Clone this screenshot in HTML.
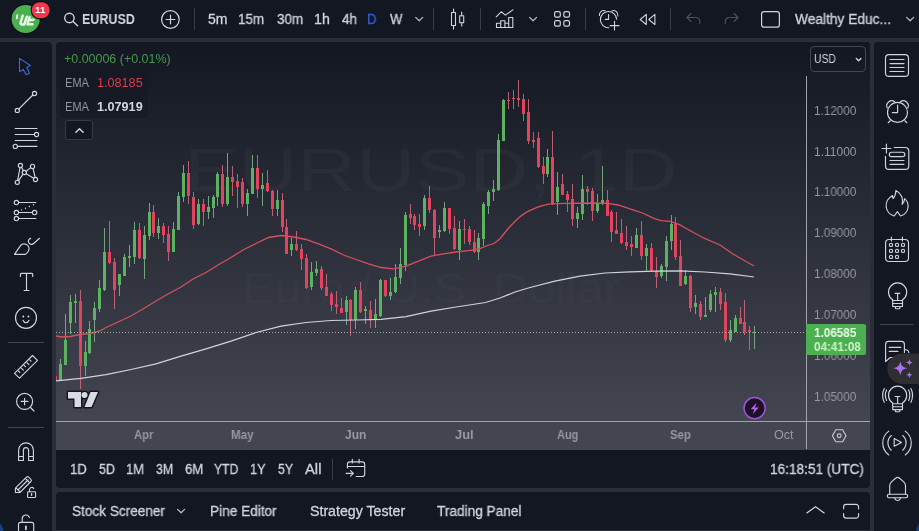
<!DOCTYPE html>
<html><head><meta charset="utf-8"><title>EURUSD chart</title>
<style>
*{box-sizing:border-box;margin:0;padding:0}
html,body{width:919px;height:531px;overflow:hidden;background:#2a2e39}
body{font-family:"Liberation Sans",sans-serif;color:#d1d4dc;font-size:14px;position:relative}
.p{position:absolute;background:#131722}
.t{position:absolute;white-space:nowrap;line-height:1;transform-origin:0 0;will-change:transform;-webkit-text-stroke:0.3px currentColor}
.b{font-weight:bold}
svg{position:absolute;overflow:visible}
.i{fill:none;stroke:#d1d4dc;stroke-width:1;stroke-linecap:round;stroke-linejoin:round}
.vs{position:absolute;width:1px;background:#3a3e4a}
.hs{position:absolute;height:1px;background:#363a45}
</style></head><body>
<!-- panels -->
<div class="p" id="top" style="left:0;top:0;width:919px;height:38px"></div>
<div class="p" id="left" style="left:0;top:42px;width:52px;height:489px;border-radius:0 4px 0 0"></div>
<div class="p" id="chart" style="left:56px;top:42px;width:814px;height:446px;border-radius:4px;overflow:hidden">
  <div style="position:absolute;left:0;top:0;width:814px;height:380px;background:linear-gradient(#131722,#434651)"></div>
  <div style="position:absolute;left:0;top:379px;width:814px;height:29px;background:#434651"></div>
</div>
<div class="p" id="bottom" style="left:56px;top:492px;width:814px;height:38px;border-radius:4px 4px 0 0"></div>
<div class="p" id="right" style="left:874px;top:42px;width:45px;height:489px;border-radius:4px 0 0 0"></div>

<!-- chart svg -->
<svg id="cs" width="919" height="531" viewBox="0 0 919 531" style="left:0;top:0" shape-rendering="crispEdges">
  <defs><clipPath id="cp"><rect x="56" y="42" width="750" height="379"/></clipPath></defs>
  <g font-family="Liberation Sans, sans-serif" fill="#b0b4c4" fill-opacity="0.045" text-anchor="middle" shape-rendering="auto">
    <text x="431" y="190.500" font-size="61" textLength="494" lengthAdjust="spacingAndGlyphs">EURUSD, 1D</text>
    <text x="431" y="303" font-size="43" textLength="378" lengthAdjust="spacingAndGlyphs">Euro / U.S. Dollar</text>
  </g>
  <g clip-path="url(#cp)">
<rect x="55" y="376" width="1" height="5" fill="#d56a7c" fill-opacity=".85"/><rect x="54" y="376" width="3" height="5" fill="#e3435c"/>
<rect x="60" y="359" width="1" height="21" fill="#7fb888" fill-opacity=".85"/><rect x="59" y="364" width="3" height="16" fill="#5cb260"/>
<rect x="65" y="314" width="1" height="51" fill="#7fb888" fill-opacity=".85"/><rect x="64" y="340" width="3" height="25" fill="#5cb260"/>
<rect x="70" y="295" width="1" height="39" fill="#7fb888" fill-opacity=".85"/><rect x="69" y="302" width="3" height="21" fill="#5cb260"/>
<rect x="75" y="294" width="1" height="29" fill="#7fb888" fill-opacity=".85"/><rect x="74" y="301" width="3" height="2" fill="#5cb260"/>
<rect x="80" y="290" width="1" height="99" fill="#d56a7c" fill-opacity=".85"/><rect x="79" y="301" width="3" height="65" fill="#e3435c"/>
<rect x="85" y="341" width="1" height="35" fill="#7fb888" fill-opacity=".85"/><rect x="84" y="352" width="3" height="14" fill="#5cb260"/>
<rect x="89" y="321" width="1" height="33" fill="#7fb888" fill-opacity=".85"/><rect x="88" y="329" width="3" height="24" fill="#5cb260"/>
<rect x="94" y="302" width="1" height="40" fill="#7fb888" fill-opacity=".85"/><rect x="93" y="308" width="3" height="12" fill="#5cb260"/>
<rect x="99" y="280" width="1" height="32" fill="#7fb888" fill-opacity=".85"/><rect x="98" y="288" width="3" height="21" fill="#5cb260"/>
<rect x="104" y="228" width="1" height="63" fill="#7fb888" fill-opacity=".85"/><rect x="103" y="252" width="3" height="38" fill="#5cb260"/>
<rect x="109" y="221" width="1" height="43" fill="#d56a7c" fill-opacity=".85"/><rect x="108" y="252" width="3" height="11" fill="#e3435c"/>
<rect x="114" y="258" width="1" height="51" fill="#d56a7c" fill-opacity=".85"/><rect x="113" y="262" width="3" height="28" fill="#e3435c"/>
<rect x="119" y="274" width="1" height="22" fill="#7fb888" fill-opacity=".85"/><rect x="118" y="274" width="3" height="11" fill="#5cb260"/>
<rect x="124" y="254" width="1" height="22" fill="#7fb888" fill-opacity=".85"/><rect x="123" y="257" width="3" height="19" fill="#5cb260"/>
<rect x="129" y="245" width="1" height="22" fill="#7fb888" fill-opacity=".85"/><rect x="128" y="256" width="3" height="2" fill="#5cb260"/>
<rect x="134" y="222" width="1" height="42" fill="#7fb888" fill-opacity=".85"/><rect x="133" y="230" width="3" height="27" fill="#5cb260"/>
<rect x="139" y="223" width="1" height="36" fill="#d56a7c" fill-opacity=".85"/><rect x="138" y="230" width="3" height="28" fill="#e3435c"/>
<rect x="144" y="226" width="1" height="53" fill="#7fb888" fill-opacity=".85"/><rect x="143" y="235" width="3" height="24" fill="#5cb260"/>
<rect x="149" y="203" width="1" height="37" fill="#7fb888" fill-opacity=".85"/><rect x="148" y="212" width="3" height="24" fill="#5cb260"/>
<rect x="153" y="205" width="1" height="32" fill="#d56a7c" fill-opacity=".85"/><rect x="152" y="212" width="3" height="21" fill="#e3435c"/>
<rect x="158" y="218" width="1" height="21" fill="#7fb888" fill-opacity=".85"/><rect x="157" y="226" width="3" height="7" fill="#5cb260"/>
<rect x="163" y="223" width="1" height="20" fill="#d56a7c" fill-opacity=".85"/><rect x="162" y="226" width="3" height="9" fill="#e3435c"/>
<rect x="168" y="226" width="1" height="35" fill="#d56a7c" fill-opacity=".85"/><rect x="167" y="234" width="3" height="18" fill="#e3435c"/>
<rect x="173" y="222" width="1" height="30" fill="#7fb888" fill-opacity=".85"/><rect x="172" y="229" width="3" height="23" fill="#5cb260"/>
<rect x="178" y="192" width="1" height="38" fill="#7fb888" fill-opacity=".85"/><rect x="177" y="196" width="3" height="34" fill="#5cb260"/>
<rect x="183" y="165" width="1" height="37" fill="#7fb888" fill-opacity=".85"/><rect x="182" y="173" width="3" height="24" fill="#5cb260"/>
<rect x="188" y="161" width="1" height="43" fill="#d56a7c" fill-opacity=".85"/><rect x="187" y="173" width="3" height="23" fill="#e3435c"/>
<rect x="193" y="192" width="1" height="37" fill="#d56a7c" fill-opacity=".85"/><rect x="192" y="197" width="3" height="28" fill="#e3435c"/>
<rect x="198" y="199" width="1" height="26" fill="#7fb888" fill-opacity=".85"/><rect x="197" y="204" width="3" height="20" fill="#5cb260"/>
<rect x="203" y="199" width="1" height="27" fill="#d56a7c" fill-opacity=".85"/><rect x="202" y="204" width="3" height="8" fill="#e3435c"/>
<rect x="208" y="196" width="1" height="23" fill="#7fb888" fill-opacity=".85"/><rect x="207" y="207" width="3" height="5" fill="#5cb260"/>
<rect x="213" y="195" width="1" height="23" fill="#7fb888" fill-opacity=".85"/><rect x="212" y="197" width="3" height="11" fill="#5cb260"/>
<rect x="217" y="172" width="1" height="34" fill="#7fb888" fill-opacity=".85"/><rect x="216" y="174" width="3" height="23" fill="#5cb260"/>
<rect x="222" y="165" width="1" height="42" fill="#d56a7c" fill-opacity=".85"/><rect x="221" y="174" width="3" height="30" fill="#e3435c"/>
<rect x="227" y="153" width="1" height="53" fill="#7fb888" fill-opacity=".85"/><rect x="226" y="177" width="3" height="27" fill="#5cb260"/>
<rect x="232" y="166" width="1" height="30" fill="#d56a7c" fill-opacity=".85"/><rect x="231" y="177" width="3" height="5" fill="#e3435c"/>
<rect x="237" y="174" width="1" height="34" fill="#d56a7c" fill-opacity=".85"/><rect x="236" y="181" width="3" height="6" fill="#e3435c"/>
<rect x="242" y="178" width="1" height="29" fill="#d56a7c" fill-opacity=".85"/><rect x="241" y="182" width="3" height="22" fill="#e3435c"/>
<rect x="247" y="189" width="1" height="27" fill="#7fb888" fill-opacity=".85"/><rect x="246" y="193" width="3" height="11" fill="#5cb260"/>
<rect x="252" y="155" width="1" height="39" fill="#7fb888" fill-opacity=".85"/><rect x="251" y="168" width="3" height="26" fill="#5cb260"/>
<rect x="257" y="155" width="1" height="43" fill="#d56a7c" fill-opacity=".85"/><rect x="256" y="168" width="3" height="21" fill="#e3435c"/>
<rect x="262" y="173" width="1" height="33" fill="#7fb888" fill-opacity=".85"/><rect x="261" y="185" width="3" height="4" fill="#5cb260"/>
<rect x="267" y="170" width="1" height="22" fill="#d56a7c" fill-opacity=".85"/><rect x="266" y="183" width="3" height="8" fill="#e3435c"/>
<rect x="272" y="190" width="1" height="26" fill="#d56a7c" fill-opacity=".85"/><rect x="271" y="191" width="3" height="18" fill="#e3435c"/>
<rect x="277" y="190" width="1" height="26" fill="#7fb888" fill-opacity=".85"/><rect x="276" y="200" width="3" height="9" fill="#5cb260"/>
<rect x="282" y="193" width="1" height="39" fill="#d56a7c" fill-opacity=".85"/><rect x="281" y="200" width="3" height="27" fill="#e3435c"/>
<rect x="286" y="219" width="1" height="35" fill="#d56a7c" fill-opacity=".85"/><rect x="285" y="227" width="3" height="27" fill="#e3435c"/>
<rect x="291" y="238" width="1" height="18" fill="#7fb888" fill-opacity=".85"/><rect x="290" y="244" width="3" height="6" fill="#5cb260"/>
<rect x="296" y="231" width="1" height="20" fill="#d56a7c" fill-opacity=".85"/><rect x="295" y="244" width="3" height="6" fill="#e3435c"/>
<rect x="301" y="244" width="1" height="26" fill="#d56a7c" fill-opacity=".85"/><rect x="300" y="249" width="3" height="10" fill="#e3435c"/>
<rect x="306" y="254" width="1" height="35" fill="#d56a7c" fill-opacity=".85"/><rect x="305" y="258" width="3" height="30" fill="#e3435c"/>
<rect x="311" y="262" width="1" height="28" fill="#7fb888" fill-opacity=".85"/><rect x="310" y="272" width="3" height="15" fill="#5cb260"/>
<rect x="316" y="261" width="1" height="15" fill="#7fb888" fill-opacity=".85"/><rect x="315" y="269" width="3" height="4" fill="#5cb260"/>
<rect x="321" y="266" width="1" height="24" fill="#d56a7c" fill-opacity=".85"/><rect x="320" y="269" width="3" height="19" fill="#e3435c"/>
<rect x="326" y="274" width="1" height="22" fill="#d56a7c" fill-opacity=".85"/><rect x="325" y="287" width="3" height="9" fill="#e3435c"/>
<rect x="331" y="292" width="1" height="19" fill="#d56a7c" fill-opacity=".85"/><rect x="330" y="294" width="3" height="11" fill="#e3435c"/>
<rect x="336" y="291" width="1" height="23" fill="#d56a7c" fill-opacity=".85"/><rect x="335" y="304" width="3" height="3" fill="#e3435c"/>
<rect x="341" y="298" width="1" height="15" fill="#d56a7c" fill-opacity=".85"/><rect x="340" y="308" width="3" height="5" fill="#e3435c"/>
<rect x="346" y="296" width="1" height="29" fill="#7fb888" fill-opacity=".85"/><rect x="345" y="300" width="3" height="12" fill="#5cb260"/>
<rect x="350" y="299" width="1" height="37" fill="#d56a7c" fill-opacity=".85"/><rect x="349" y="300" width="3" height="20" fill="#e3435c"/>
<rect x="355" y="287" width="1" height="42" fill="#7fb888" fill-opacity=".85"/><rect x="354" y="290" width="3" height="30" fill="#5cb260"/>
<rect x="360" y="282" width="1" height="31" fill="#d56a7c" fill-opacity=".85"/><rect x="359" y="290" width="3" height="22" fill="#e3435c"/>
<rect x="365" y="306" width="1" height="18" fill="#7fb888" fill-opacity=".85"/><rect x="364" y="309" width="3" height="2" fill="#5cb260"/>
<rect x="370" y="301" width="1" height="27" fill="#d56a7c" fill-opacity=".85"/><rect x="369" y="310" width="3" height="10" fill="#e3435c"/>
<rect x="375" y="299" width="1" height="29" fill="#7fb888" fill-opacity=".85"/><rect x="374" y="314" width="3" height="6" fill="#5cb260"/>
<rect x="380" y="279" width="1" height="38" fill="#7fb888" fill-opacity=".85"/><rect x="379" y="280" width="3" height="36" fill="#5cb260"/>
<rect x="385" y="280" width="1" height="17" fill="#d56a7c" fill-opacity=".85"/><rect x="384" y="280" width="3" height="16" fill="#e3435c"/>
<rect x="390" y="278" width="1" height="22" fill="#7fb888" fill-opacity=".85"/><rect x="389" y="292" width="3" height="4" fill="#5cb260"/>
<rect x="395" y="264" width="1" height="29" fill="#7fb888" fill-opacity=".85"/><rect x="394" y="277" width="3" height="15" fill="#5cb260"/>
<rect x="400" y="248" width="1" height="36" fill="#7fb888" fill-opacity=".85"/><rect x="399" y="264" width="3" height="14" fill="#5cb260"/>
<rect x="405" y="212" width="1" height="59" fill="#7fb888" fill-opacity=".85"/><rect x="404" y="215" width="3" height="50" fill="#5cb260"/>
<rect x="410" y="204" width="1" height="20" fill="#d56a7c" fill-opacity=".85"/><rect x="409" y="214" width="3" height="4" fill="#e3435c"/>
<rect x="414" y="214" width="1" height="16" fill="#d56a7c" fill-opacity=".85"/><rect x="413" y="216" width="3" height="9" fill="#e3435c"/>
<rect x="419" y="214" width="1" height="22" fill="#d56a7c" fill-opacity=".85"/><rect x="418" y="224" width="3" height="3" fill="#e3435c"/>
<rect x="424" y="195" width="1" height="35" fill="#7fb888" fill-opacity=".85"/><rect x="423" y="198" width="3" height="28" fill="#5cb260"/>
<rect x="429" y="186" width="1" height="27" fill="#d56a7c" fill-opacity=".85"/><rect x="428" y="198" width="3" height="12" fill="#e3435c"/>
<rect x="434" y="209" width="1" height="47" fill="#d56a7c" fill-opacity=".85"/><rect x="433" y="210" width="3" height="28" fill="#e3435c"/>
<rect x="439" y="225" width="1" height="13" fill="#7fb888" fill-opacity=".85"/><rect x="438" y="230" width="3" height="2" fill="#5cb260"/>
<rect x="444" y="202" width="1" height="30" fill="#7fb888" fill-opacity=".85"/><rect x="443" y="208" width="3" height="23" fill="#5cb260"/>
<rect x="449" y="208" width="1" height="26" fill="#d56a7c" fill-opacity=".85"/><rect x="448" y="208" width="3" height="21" fill="#e3435c"/>
<rect x="454" y="216" width="1" height="34" fill="#d56a7c" fill-opacity=".85"/><rect x="453" y="228" width="3" height="21" fill="#e3435c"/>
<rect x="459" y="221" width="1" height="39" fill="#7fb888" fill-opacity=".85"/><rect x="458" y="229" width="3" height="21" fill="#5cb260"/>
<rect x="464" y="219" width="1" height="25" fill="#d56a7c" fill-opacity=".85"/><rect x="463" y="229" width="3" height="1" fill="#e3435c"/>
<rect x="469" y="226" width="1" height="19" fill="#d56a7c" fill-opacity=".85"/><rect x="468" y="229" width="3" height="13" fill="#e3435c"/>
<rect x="474" y="230" width="1" height="23" fill="#d56a7c" fill-opacity=".85"/><rect x="473" y="242" width="3" height="10" fill="#e3435c"/>
<rect x="478" y="233" width="1" height="27" fill="#7fb888" fill-opacity=".85"/><rect x="477" y="238" width="3" height="14" fill="#5cb260"/>
<rect x="483" y="202" width="1" height="44" fill="#7fb888" fill-opacity=".85"/><rect x="482" y="204" width="3" height="35" fill="#5cb260"/>
<rect x="488" y="190" width="1" height="24" fill="#7fb888" fill-opacity=".85"/><rect x="487" y="192" width="3" height="14" fill="#5cb260"/>
<rect x="493" y="180" width="1" height="21" fill="#7fb888" fill-opacity=".85"/><rect x="492" y="189" width="3" height="3" fill="#5cb260"/>
<rect x="498" y="134" width="1" height="57" fill="#7fb888" fill-opacity=".85"/><rect x="497" y="140" width="3" height="50" fill="#5cb260"/>
<rect x="503" y="99" width="1" height="42" fill="#7fb888" fill-opacity=".85"/><rect x="502" y="100" width="3" height="41" fill="#5cb260"/>
<rect x="508" y="92" width="1" height="17" fill="#d56a7c" fill-opacity=".85"/><rect x="507" y="100" width="3" height="1" fill="#e3435c"/>
<rect x="513" y="90" width="1" height="19" fill="#d56a7c" fill-opacity=".85"/><rect x="512" y="98" width="3" height="1" fill="#e3435c"/>
<rect x="518" y="80" width="1" height="27" fill="#d56a7c" fill-opacity=".85"/><rect x="517" y="98" width="3" height="2" fill="#e3435c"/>
<rect x="523" y="94" width="1" height="27" fill="#d56a7c" fill-opacity=".85"/><rect x="522" y="99" width="3" height="15" fill="#e3435c"/>
<rect x="528" y="99" width="1" height="45" fill="#d56a7c" fill-opacity=".85"/><rect x="527" y="112" width="3" height="29" fill="#e3435c"/>
<rect x="533" y="132" width="1" height="16" fill="#d56a7c" fill-opacity=".85"/><rect x="532" y="140" width="3" height="2" fill="#e3435c"/>
<rect x="538" y="132" width="1" height="36" fill="#d56a7c" fill-opacity=".85"/><rect x="537" y="138" width="3" height="29" fill="#e3435c"/>
<rect x="543" y="157" width="1" height="27" fill="#d56a7c" fill-opacity=".85"/><rect x="542" y="166" width="3" height="8" fill="#e3435c"/>
<rect x="547" y="149" width="1" height="28" fill="#7fb888" fill-opacity=".85"/><rect x="546" y="157" width="3" height="17" fill="#5cb260"/>
<rect x="552" y="131" width="1" height="74" fill="#d56a7c" fill-opacity=".85"/><rect x="551" y="157" width="3" height="47" fill="#e3435c"/>
<rect x="557" y="172" width="1" height="43" fill="#7fb888" fill-opacity=".85"/><rect x="556" y="187" width="3" height="15" fill="#5cb260"/>
<rect x="562" y="174" width="1" height="21" fill="#d56a7c" fill-opacity=".85"/><rect x="561" y="184" width="3" height="11" fill="#e3435c"/>
<rect x="567" y="191" width="1" height="21" fill="#d56a7c" fill-opacity=".85"/><rect x="566" y="194" width="3" height="6" fill="#e3435c"/>
<rect x="572" y="184" width="1" height="42" fill="#d56a7c" fill-opacity=".85"/><rect x="571" y="199" width="3" height="20" fill="#e3435c"/>
<rect x="577" y="207" width="1" height="21" fill="#7fb888" fill-opacity=".85"/><rect x="576" y="213" width="3" height="6" fill="#5cb260"/>
<rect x="582" y="175" width="1" height="45" fill="#7fb888" fill-opacity=".85"/><rect x="581" y="189" width="3" height="25" fill="#5cb260"/>
<rect x="587" y="186" width="1" height="19" fill="#d56a7c" fill-opacity=".85"/><rect x="586" y="189" width="3" height="3" fill="#e3435c"/>
<rect x="592" y="188" width="1" height="33" fill="#d56a7c" fill-opacity=".85"/><rect x="591" y="191" width="3" height="20" fill="#e3435c"/>
<rect x="597" y="194" width="1" height="19" fill="#7fb888" fill-opacity=".85"/><rect x="596" y="203" width="3" height="8" fill="#5cb260"/>
<rect x="602" y="166" width="1" height="39" fill="#7fb888" fill-opacity=".85"/><rect x="601" y="200" width="3" height="4" fill="#5cb260"/>
<rect x="607" y="190" width="1" height="26" fill="#d56a7c" fill-opacity=".85"/><rect x="606" y="200" width="3" height="16" fill="#e3435c"/>
<rect x="611" y="210" width="1" height="32" fill="#d56a7c" fill-opacity=".85"/><rect x="610" y="212" width="3" height="20" fill="#e3435c"/>
<rect x="616" y="212" width="1" height="22" fill="#d56a7c" fill-opacity=".85"/><rect x="615" y="230" width="3" height="4" fill="#e3435c"/>
<rect x="621" y="219" width="1" height="25" fill="#d56a7c" fill-opacity=".85"/><rect x="620" y="233" width="3" height="10" fill="#e3435c"/>
<rect x="626" y="226" width="1" height="24" fill="#d56a7c" fill-opacity=".85"/><rect x="625" y="242" width="3" height="4" fill="#e3435c"/>
<rect x="631" y="236" width="1" height="20" fill="#d56a7c" fill-opacity=".85"/><rect x="630" y="244" width="3" height="3" fill="#e3435c"/>
<rect x="636" y="228" width="1" height="20" fill="#7fb888" fill-opacity=".85"/><rect x="635" y="235" width="3" height="13" fill="#5cb260"/>
<rect x="641" y="221" width="1" height="39" fill="#d56a7c" fill-opacity=".85"/><rect x="640" y="235" width="3" height="21" fill="#e3435c"/>
<rect x="646" y="244" width="1" height="27" fill="#7fb888" fill-opacity=".85"/><rect x="645" y="248" width="3" height="8" fill="#5cb260"/>
<rect x="651" y="243" width="1" height="29" fill="#d56a7c" fill-opacity=".85"/><rect x="650" y="248" width="3" height="23" fill="#e3435c"/>
<rect x="656" y="257" width="1" height="31" fill="#d56a7c" fill-opacity=".85"/><rect x="655" y="271" width="3" height="6" fill="#e3435c"/>
<rect x="661" y="264" width="1" height="14" fill="#7fb888" fill-opacity=".85"/><rect x="660" y="266" width="3" height="10" fill="#5cb260"/>
<rect x="666" y="236" width="1" height="45" fill="#7fb888" fill-opacity=".85"/><rect x="665" y="241" width="3" height="26" fill="#5cb260"/>
<rect x="671" y="215" width="1" height="35" fill="#7fb888" fill-opacity=".85"/><rect x="670" y="224" width="3" height="17" fill="#5cb260"/>
<rect x="675" y="217" width="1" height="43" fill="#d56a7c" fill-opacity=".85"/><rect x="674" y="224" width="3" height="33" fill="#e3435c"/>
<rect x="680" y="240" width="1" height="46" fill="#d56a7c" fill-opacity=".85"/><rect x="679" y="256" width="3" height="30" fill="#e3435c"/>
<rect x="685" y="270" width="1" height="15" fill="#7fb888" fill-opacity=".85"/><rect x="684" y="276" width="3" height="8" fill="#5cb260"/>
<rect x="690" y="275" width="1" height="37" fill="#d56a7c" fill-opacity=".85"/><rect x="689" y="276" width="3" height="32" fill="#e3435c"/>
<rect x="695" y="295" width="1" height="19" fill="#7fb888" fill-opacity=".85"/><rect x="694" y="303" width="3" height="4" fill="#5cb260"/>
<rect x="700" y="301" width="1" height="19" fill="#d56a7c" fill-opacity=".85"/><rect x="699" y="304" width="3" height="13" fill="#e3435c"/>
<rect x="705" y="297" width="1" height="20" fill="#7fb888" fill-opacity=".85"/><rect x="704" y="315" width="3" height="2" fill="#5cb260"/>
<rect x="710" y="290" width="1" height="22" fill="#7fb888" fill-opacity=".85"/><rect x="709" y="294" width="3" height="16" fill="#5cb260"/>
<rect x="715" y="287" width="1" height="25" fill="#7fb888" fill-opacity=".85"/><rect x="714" y="292" width="3" height="3" fill="#5cb260"/>
<rect x="720" y="288" width="1" height="22" fill="#d56a7c" fill-opacity=".85"/><rect x="719" y="292" width="3" height="12" fill="#e3435c"/>
<rect x="725" y="293" width="1" height="49" fill="#d56a7c" fill-opacity=".85"/><rect x="724" y="302" width="3" height="38" fill="#e3435c"/>
<rect x="730" y="320" width="1" height="22" fill="#7fb888" fill-opacity=".85"/><rect x="729" y="330" width="3" height="10" fill="#5cb260"/>
<rect x="735" y="315" width="1" height="17" fill="#7fb888" fill-opacity=".85"/><rect x="734" y="318" width="3" height="14" fill="#5cb260"/>
<rect x="740" y="307" width="1" height="17" fill="#d56a7c" fill-opacity=".85"/><rect x="739" y="318" width="3" height="6" fill="#e3435c"/>
<rect x="744" y="300" width="1" height="35" fill="#d56a7c" fill-opacity=".85"/><rect x="743" y="322" width="3" height="10" fill="#e3435c"/>
<rect x="749" y="326" width="1" height="24" fill="#d56a7c" fill-opacity=".85"/><rect x="748" y="330" width="3" height="2" fill="#e3435c"/>
<rect x="754" y="326" width="1" height="23" fill="#7fb888" fill-opacity=".85"/><rect x="753" y="332" width="3" height="1" fill="#5cb260"/>
    <polyline points="56.0,381.0 81.0,378.4 106.0,374.6 131.0,369.5 156.0,363.8 181.0,356.2 206.0,348.8 231.0,341.2 256.0,332.5 281.0,326.2 306.0,322.5 331.0,320.5 356.0,320.0 381.0,319.4 406.0,316.6 431.0,311.2 456.0,307.0 485.5,302.5 500.0,298.0 515.0,292.0 530.0,287.5 555.0,281.2 580.0,276.2 605.0,273.0 630.0,271.8 655.0,271.2 680.0,270.8 705.0,272.0 730.0,273.8 754.0,277.0" fill="none" stroke="#cfd2da" stroke-width="1.25" shape-rendering="auto"/>
    <polyline points="56.0,336.0 62.0,337.0 70.0,336.5 80.0,334.5 90.0,333.5 100.0,331.0 106.0,327.5 118.0,322.0 131.0,316.0 143.0,309.0 156.0,301.0 168.0,294.0 181.0,287.0 193.0,279.0 206.0,272.5 218.0,265.0 231.0,257.5 243.0,250.0 256.0,243.5 268.5,237.5 281.0,235.5 293.5,237.0 306.0,239.5 318.5,243.8 331.0,248.8 343.5,255.0 356.0,259.5 368.5,263.8 381.0,267.5 393.5,268.8 406.0,266.2 418.5,261.2 431.0,256.2 443.5,253.8 456.0,252.0 468.5,250.6 474.0,250.0 480.0,248.7 487.5,245.5 494.0,243.5 500.0,238.7 505.0,232.5 510.0,226.5 515.0,221.5 519.0,217.5 523.8,213.9 528.0,211.3 532.5,209.4 537.0,207.4 542.5,205.6 548.8,204.2 557.5,203.6 567.5,203.3 592.5,203.0 607.5,203.3 618.0,205.0 630.0,208.8 642.5,213.0 655.0,218.8 661.0,220.6 670.0,221.3 679.0,224.4 689.0,230.0 704.0,238.2 720.0,245.0 732.5,253.8 743.0,259.8 754.0,266.0" fill="none" stroke="#d4505c" stroke-width="1.3" shape-rendering="auto"/>
    <line x1="56" y1="332.5" x2="806" y2="332.5" stroke="#c3cdc4" stroke-opacity="0.75" stroke-width="1" stroke-dasharray="1 2"/>
  </g>
  <rect x="806" y="76" width="1" height="373" fill="#a0a3ad"/>
  <rect x="56" y="421" width="814" height="1" fill="#a0a3ad"/>
</svg>

<div class="t" style="left:814.02px;top:105.00px;font-size:12px;-webkit-text-stroke:0;color:#9598a1;transform:scaleX(0.9762)">1.12000</div>
<div class="t" style="left:814.00px;top:146.00px;font-size:12px;-webkit-text-stroke:0;color:#9598a1;transform:scaleX(1.0000)">1.11000</div>
<div class="t" style="left:814.02px;top:186.00px;font-size:12px;-webkit-text-stroke:0;color:#9598a1;transform:scaleX(0.9762)">1.10000</div>
<div class="t" style="left:814.02px;top:227.00px;font-size:12px;-webkit-text-stroke:0;color:#9598a1;transform:scaleX(0.9762)">1.09000</div>
<div class="t" style="left:814.02px;top:268.00px;font-size:12px;-webkit-text-stroke:0;color:#9598a1;transform:scaleX(0.9762)">1.08000</div>
<div class="t" style="left:814.02px;top:309.00px;font-size:12px;-webkit-text-stroke:0;color:#9598a1;transform:scaleX(0.9762)">1.07000</div>
<div class="t" style="left:814.02px;top:350.00px;font-size:12px;-webkit-text-stroke:0;color:#9598a1;transform:scaleX(0.9762)">1.06000</div>
<div class="t" style="left:814.02px;top:391.00px;font-size:12px;-webkit-text-stroke:0;color:#9598a1;transform:scaleX(0.9762)">1.05000</div>
<!-- price axis -->
<div style="position:absolute;left:806px;top:324px;width:60px;height:31px;background:#4caf50;border-radius:2px"></div>
<div style="position:absolute;left:810px;top:46px;width:56px;height:26px;border:1px solid #434651;border-radius:4px"></div>
<svg width="919" height="80" style="left:0;top:0" viewBox="0 0 919 80" shape-rendering="auto"><path class="i" style="stroke-width:1.400" d="M856.300 58.500l2.300 2.300l2.300-2.300"/></svg>

<!-- time axis -->
<svg width="919" height="30" style="left:0;top:420px" viewBox="0 420 919 30" shape-rendering="auto"><g class="i" style="stroke:#c5c8d0;stroke-width:1.150"><path d="M832.400 435.700L835.800 429.700H842.600L846 435.700L842.600 441.700H835.800Z"/><circle cx="839.200" cy="435.700" r="1.900"/></g></svg>

<!-- legend -->
<div style="position:absolute;left:60px;top:72px;width:88px;height:46px;background:rgba(19,23,34,0.55);border-radius:3px"></div>
<div style="position:absolute;left:65px;top:120px;width:28px;height:20px;border:1px solid #363a45;border-radius:3px;background:#131722"></div>
<svg width="919" height="150" style="left:0;top:0" viewBox="0 0 919 150" shape-rendering="auto"><path class="i" style="stroke-width:1.500" d="M75.900 132.200l3.600-3.500l3.600 3.500"/></svg>

<!-- TV logo -->
<svg width="34" height="20" style="left:65px;top:389px" viewBox="0 0 34 20" shape-rendering="auto">
 <g stroke="#131722" stroke-width="3" stroke-linejoin="round" fill="#131722"><path d="M3 3h13v15h-6.500v-8.500h-6.500z"/><circle cx="19.500" cy="6" r="3"/><path d="M25.500 3h7.500l-6.500 15h-7z"/></g>
 <g fill="#d9dbe3"><path d="M3 3h13v15h-6.500v-8.500h-6.500z"/><circle cx="19.500" cy="6" r="3"/><path d="M25.500 3h7.500l-6.500 15h-7z"/></g>
</svg>
<!-- lightning -->
<svg width="919" height="40" style="left:0;top:390px" viewBox="0 390 919 40" shape-rendering="auto"><circle cx="754.600" cy="408.100" r="10.600" fill="#1c1128" stroke="#a052d0" stroke-width="1.500"/><path d="M756.600 402.800L750.600 409.200H754.400L752.700 414.300L758.700 407.600H754.900Z" fill="#c05ee6"/></svg>

<!-- top bar -->
<svg width="44" height="38" style="left:8px;top:0" viewBox="8 0 44 38" shape-rendering="auto">
 <circle cx="25.700" cy="19" r="15.200" fill="#0b0e16"/>
 <circle cx="25.700" cy="19" r="14.100" fill="#4caf50"/>
 <g fill="none" stroke="#ecfbea" stroke-linecap="round" stroke-linejoin="round">
  <path d="M17.300 15.200L16.800 18.400" stroke-width="1.900"/>
  <path d="M22.700 15.600L20.700 22.200C20.200 23.900 21 24.400 22.300 24.400H24.300L26.800 16.800" stroke-width="2.500"/>
  <path d="M29.600 17L27.400 24.300H32.600M28.700 20.200L33.600 19.700" stroke-width="2.400"/>
 </g>
 <rect x="30.600" y="0.700" width="20.200" height="18.800" rx="9.400" fill="#0b0e16"/>
 <rect x="31.700" y="2.200" width="18" height="16.100" rx="8" fill="#f0384a"/>
</svg>
<svg id="tb" width="919" height="38" style="left:0;top:0" viewBox="0 0 919 38" shape-rendering="auto">
 <g class="i" style="stroke-width:1.4"><circle cx="69.400" cy="18" r="4.700"/><path d="M73 21.600l4.600 4.200"/></g>
 <g class="i" style="stroke-width:1.200"><circle cx="170.400" cy="19.500" r="8.800"/><path d="M166.200 19.500h8.600M170.500 15.200v8.600"/></g>
 <g class="i" style="stroke:#b8bbc4;stroke-width:1.300"><path d="M415.700 17.400l3.500 3.300l3.500-3.300"/><path d="M529.600 17.400l3.500 3.300l3.500-3.300"/><path d="M906.600 17.400l3.500 3.300l3.500-3.300"/></g>
 <g class="i" style="stroke-width:1.100"><path d="M453.500 9v3.500M453.500 25.500v3.400M461.700 12v3.800M461.700 22.700v3.300"/><rect x="451.500" y="12.500" width="4" height="13"/><rect x="459.700" y="15.800" width="4" height="6.900"/></g>
 <g class="i" style="stroke-width:1.100"><path d="M496.200 16.800l5-5l4.200 3.300l7.500-5.200"/><path d="M496.500 27.500v-4.200h4.200v4.200M500.700 23.300v-2.600h4.200v6.800M504.900 23.300h3.800v4.200M508.700 27.500v-10h4.100v10M496.500 27.500h16.300"/></g>
 <g class="i" style="stroke-width:1.200"><rect x="554.600" y="11.700" width="5.700" height="5.500" rx="1.600"/><rect x="563.800" y="11.700" width="5.700" height="5.500" rx="1.600"/><rect x="554.600" y="20.700" width="5.700" height="5.500" rx="1.600"/><rect x="563.800" y="20.700" width="5.700" height="5.500" rx="1.600"/></g>
 <g class="i" style="stroke-width:1.100"><path d="M608.800 27.700a8.100 8.100 0 1 1 7.800-8.600"/><path d="M599.400 15.500a4.400 4.400 0 0 1 5.700-4.700M617.800 16a4.400 4.400 0 0 0-5.900-5.100"/><path d="M608.600 14.500v4.900h-3.300"/><path d="M610 25.600h9M614.500 21.300v8.700"/></g>
 <g class="i" style="stroke-width:1.100"><path d="M646.300 14.400v10.200l-6.100-5.100zM654.900 14.400v10.200l-6.100-5.100z"/></g>
 <g class="i" style="stroke:#4c505c;stroke-width:1.100"><path d="M691 13.500l-4.100 4l4.100 4M687 17.500h8.500a4.300 4.300 0 0 1 4.300 4.300v2"/><path d="M734 13.500l4.100 4l-4.100 4M738 17.500h-8.500a4.300 4.300 0 0 0-4.300 4.300v2"/></g>
 <rect class="i" style="stroke-width:1.200" x="761.600" y="11.600" width="17.800" height="15.600" rx="2.500"/>
</svg>
<div class="vs" style="left:194px;top:8px;height:22px"></div>
<div class="vs" style="left:433px;top:8px;height:22px"></div>
<div class="vs" style="left:480px;top:8px;height:22px"></div>
<div class="vs" style="left:585px;top:8px;height:22px"></div>
<div class="vs" style="left:670px;top:8px;height:22px"></div>

<!-- range bar -->
<div class="vs" style="left:332px;top:459px;height:21px"></div>
<svg width="919" height="40" style="left:0;top:450px" viewBox="0 450 919 40" shape-rendering="auto"><g class="i" style="stroke-width:1.150"><path d="M352.300 459.200V463M359.100 459.200V463M347.400 468V464.400A2.500 2.500 0 0 1 349.900 461.900H362.200A2.500 2.500 0 0 1 364.700 464.400V474A2.500 2.500 0 0 1 362.200 476.500H356.200M347.400 466.500H364.700M346.200 473.400H353.300M350.500 470.600L353.400 473.400L350.500 476.200"/></g></svg>

<!-- bottom panel -->
<svg width="10" height="6" style="left:176px;top:508px" viewBox="176 508 10 6" shape-rendering="auto"><path class="i" style="stroke:#b8bbc4;stroke-width:1.300" d="M177.600 509.400l3.500 3.300l3.500-3.300"/></svg>
<svg width="919" height="40" style="left:0;top:491px" viewBox="0 491 919 40" shape-rendering="auto"><g class="i" style="stroke-width:1.150"><path d="M806.800 513L815.500 506.700L824.200 513"/><path d="M843.600 508.800V507A2.700 2.700 0 0 1 846.300 504.300H855.900A2.700 2.700 0 0 1 858.600 507V508.800M843.600 513.600V515.400A2.700 2.700 0 0 0 846.300 518.100H855.900A2.700 2.700 0 0 0 858.600 515.400V513.600"/></g></svg>

<!-- left toolbar -->
<svg id="lt" width="52" height="489" style="left:0;top:42px" viewBox="0 42 52 489" shape-rendering="auto">
 <path class="i" style="stroke:#3f69e2;stroke-width:1.05" d="M19.500 58.400V71.800L23.300 69.400L26.100 74.700L29.400 73.300L26.900 67.500L30.300 65.500Z"/>
 <g class="i" style="stroke-width:1.150"><path d="M18.900 108.900L32.900 95"/><circle cx="34.500" cy="93.500" r="2.100"/><circle cx="17.300" cy="110.400" r="2.100"/></g>
 <g class="i" style="stroke-width:1.150"><path d="M15.200 128.500H37M15.200 134.500H34.300M15.200 140.500H37M17.500 146.400H37"/><circle cx="36.500" cy="134.500" r="2.100"/><circle cx="15.300" cy="146.400" r="2.100"/></g>
 <g class="i" style="stroke-width:1.150"><path d="M20 167.600L17.700 180.200M21.500 167.300L23.300 170.600M23 174.200L18.600 180.600M26.200 171.300L30.700 167.600M26.200 173.700L33.600 178.300M33 168.500L35.100 177.400"/><circle cx="20.400" cy="165.500" r="2.100"/><circle cx="32.500" cy="166.400" r="2.100"/><circle cx="24.300" cy="172.500" r="2.100"/><circle cx="35.500" cy="179.500" r="2.100"/><circle cx="17.300" cy="182.300" r="2.100"/></g>
 <g class="i" style="stroke-width:1.150"><path d="M18.600 202.500H35.900M18.600 212.500H32.400M18.600 218.500H35.900"/><circle cx="16.400" cy="202.500" r="2.200"/><circle cx="16.400" cy="212.500" r="2.200"/><circle cx="34.600" cy="212.500" r="2.200"/><circle cx="16.400" cy="218.500" r="2.200"/><g style="fill:#d1d4dc;stroke:none"><circle cx="21.500" cy="209.900" r=".7"/><circle cx="25.500" cy="208.300" r=".7"/><circle cx="29.400" cy="206.500" r=".7"/><circle cx="33.500" cy="204.800" r=".7"/></g></g>
 <g class="i" style="stroke-width:1.150"><path d="M14.500 254.400L20.700 245.400C22.200 243.400 25.500 243.300 27.500 245.200C29.700 247.300 29.600 250.300 27.300 252.600L25.300 254.400Z"/><path d="M30.600 238.400C28.400 239.300 27.700 241.200 28.900 242.900C30.200 244.700 32.300 244.900 33.700 243.500L39.500 238.300"/></g>
 <g class="i" style="stroke-width:1.150"><path d="M20.400 276.400V274.400A1 1 0 0 1 21.400 273.400H31.700A1 1 0 0 1 32.700 274.400V276.400M26.500 273.400V290.500M24.100 290.500H29"/></g>
 <g class="i" style="stroke-width:1.150"><circle cx="26" cy="317.800" r="10.500"/><path d="M23 320.300C24.300 323.500 27.700 323.500 29 320.300"/><g style="fill:#d1d4dc;stroke:none"><circle cx="23.300" cy="316.500" r=".95"/><circle cx="28.400" cy="316.500" r=".95"/></g></g>
 <path d="M8 342.500H44" stroke="#434651" stroke-width="1"/>
 <g class="i" style="stroke-width:1.150"><path d="M32.500 355.500L37.500 360.300L19.500 378.200L14.500 373.400Z"/><path d="M18.500 371L19.800 372.300M21.300 368.200L23.300 370.200M24.100 365.400L25.400 366.700M26.900 362.600L28.900 364.600M29.700 359.800L31 361.100"/></g>
 <g class="i" style="stroke-width:1.150"><circle cx="24.600" cy="401.400" r="8"/><path d="M30.500 407.500L34 411M21.200 401.400H28M24.600 398.200V404.800"/></g>
 <path d="M8 427.500H44" stroke="#434651" stroke-width="1"/>
 <g class="i" style="stroke-width:1.150"><path d="M18.600 460.500V450.200A7.400 7.400 0 0 1 33.400 450.200V460.500H28.600V450.200A2.600 2.600 0 0 0 23.400 450.200V460.500ZM18.600 456.500H23.400M28.600 456.500H33.400"/></g>
 <g class="i" style="stroke-width:1.100"><path d="M15.400 488.200L26.500 477.100A1.600 1.600 0 0 1 28.700 477.100L30.900 479.300A1.600 1.600 0 0 1 30.900 481.500L19.900 492.500H15.400ZM15.900 487.800L20.100 492M25.300 478.400L29.600 482.700M17.900 490L28 480"/><rect x="27.600" y="491.800" width="8" height="5.700" rx=".8"/><path d="M29.500 491.800V489.500A2.300 2.300 0 0 1 33.800 488.600"/><path d="M31.600 493.800V495.200" style="stroke-width:1.400"/></g>
 <g class="i" style="stroke-width:1.150"><rect x="18.500" y="522.400" width="15.200" height="14" rx="2"/><path d="M22.200 522.400V518.400A3.700 3.700 0 0 1 29.400 517.500"/><path d="M25.900 526.300V529.300" style="stroke-width:1.800"/></g>
</svg>

<!-- right toolbar -->
<svg id="rt" width="45" height="489" style="left:874px;top:42px" viewBox="874 42 45 489" shape-rendering="auto">
 <g class="i" style="stroke-width:1.150"><rect x="885.500" y="54.600" width="23" height="21.800" rx="3.500"/><path d="M890 59.500H904M890 63.600H904M890 67.500H904M890 71.500H904"/></g>
 <g class="i" style="stroke-width:1.150"><circle cx="897.500" cy="112.400" r="10"/><path d="M887.300 108A5 5 0 0 1 894.800 101.800M907.800 108A5 5 0 0 0 900.300 101.800M897.600 105.100V112.600H892.300M890.300 120.800L888.200 122.700M904.800 120.800L906.900 122.700"/></g>
 <g class="i" style="stroke-width:1.150"><path d="M894.200 147.500H905.400A3.400 3.400 0 0 1 908.800 150.900V165.900A3.400 3.400 0 0 1 905.400 169.300H888.900A3.400 3.400 0 0 1 885.500 165.900V156.300M882 148.500H890.800M886.400 144.100V152.900"/><rect x="889.300" y="152.200" width="15.500" height="4.400" rx="2.200"/><path d="M890 160.500H904M890 164.300H904"/></g>
 <g class="i" style="stroke-width:1.150"><path d="M895.900 190.400C898.500 191.600 900.400 193.600 901.600 196.200C902.600 198.500 903 201.300 902.200 204.300C903.600 203.200 904.400 201.100 904.600 198.600C906.800 200.400 908.200 203.200 908.100 206.500C908 210.600 905.200 214.700 900.500 216L897.400 211.700L894.200 216C890.200 214.900 886.900 211.500 886.200 207C885.600 202.600 888.200 198 892.500 195.500C892.400 196.800 892.600 197.800 893.100 198.500C894.900 196.500 895.900 193.700 895.900 190.400Z"/></g>
 <g class="i" style="stroke-width:1.150"><rect x="885.600" y="239.500" width="22.900" height="22" rx="3.500"/><path d="M891.400 237.100V240.900M902.400 237.100V240.900"/><circle cx="891" cy="244.900" r="1.600"/><circle cx="897" cy="244.900" r="1.600"/><circle cx="903" cy="244.900" r="1.600"/><circle cx="891" cy="250.900" r="1.600"/><circle cx="897" cy="250.900" r="1.600"/><circle cx="903" cy="250.900" r="1.600"/><circle cx="891" cy="256.900" r="1.600"/><circle cx="897" cy="256.900" r="1.600"/></g>
 <g class="i" style="stroke-width:1.150"><path d="M892.700 300.300V299.700A9.100 9.100 0 1 1 902.500 299.700V300.300"/><path d="M892.700 300.500H902.500V306.500H892.700ZM892.700 303.500H902.500M895.300 306.500V307.700A1 1 0 0 0 896.300 308.700H898.900A1 1 0 0 0 899.900 307.700V306.500M895.100 293.300H899.900M897.600 293.300V300.300"/></g>
 <path d="M880 324.500H913.500" stroke="#434651" stroke-width="1"/>
 <g class="i" style="stroke-width:1.150"><path d="M885.600 361.600V344.400A3 3 0 0 1 888.600 341.400H901.400A3 3 0 0 1 904.400 344.400V352.400M885.600 361.600L890.200 357.500H893M889.200 347.400H900.800M889.200 351.300H898M904.400 349.500C906.800 349.600 908.700 350.700 908.900 352.800"/></g>
 <path d="M919 353.600H902.500A15.200 15.200 0 0 0 902.500 384H919Z" fill="#2f2e32" stroke="none"/>
 <path d="M900.300 361C901.100 365.800 902.700 367.400 907.500 368.200C902.700 369 901.100 370.600 900.300 375.400C899.500 370.600 897.900 369 893.100 368.200C897.900 367.400 899.500 365.800 900.300 361ZM909.400 359C909.800 361.300 910.500 362 912.800 362.400C910.500 362.800 909.800 363.500 909.400 365.800C909 363.500 908.300 362.800 906 362.400C908.300 362 909 361.300 909.400 359ZM909.400 371.400C909.800 373.700 910.500 374.400 912.800 374.800C910.500 375.200 909.800 375.900 909.400 378.200C909 375.900 908.300 375.200 906 374.800C908.300 374.400 909 373.700 909.400 371.400Z" fill="#a970f2" stroke="none"/>
 <g class="i" style="stroke-width:1.150"><path d="M892.700 403.500V402.900A9.100 9.100 0 1 1 902.500 402.900V403.500"/><path d="M892.700 403.700H902.500V409.600H892.700ZM892.700 406.700H902.500M895.300 409.600V410.700A1 1 0 0 0 896.300 411.700H898.900A1 1 0 0 0 899.900 410.700V409.600M895.100 396.500H899.900M897.600 396.500V403.500"/><path d="M886.600 389.900A12.200 12.200 0 0 0 886.600 400.500M884.300 388.500A15.400 15.400 0 0 0 884.300 402.200M908.600 389.900A12.200 12.200 0 0 1 908.600 400.500M910.900 388.500A15.400 15.400 0 0 1 910.900 402.200"/></g>
 <g class="i" style="stroke-width:1.150"><path d="M894.200 438.600V446.200L901.500 442.400ZM891.300 435.500A9.700 9.700 0 0 0 891.300 450.200M888.800 431.100A14.800 14.800 0 0 0 888.800 455M902.700 435.500A9.700 9.700 0 0 1 902.700 450.200M905.200 431.100A14.800 14.800 0 0 1 905.200 455"/></g>
 <g class="i" style="stroke-width:1.150"><path d="M889.700 494V485.600C889.700 483.600 890.500 482.600 891.700 481.600L895.600 478.300C896.800 477.300 898.400 477.300 899.600 478.300L903.500 481.600C904.700 482.600 905.500 483.600 905.500 485.600V494"/><rect x="887.300" y="494.200" width="20.400" height="3.500" rx="1.700"/><path d="M894.600 497.900C895.600 501.400 899.600 501.400 900.600 497.900"/></g>
 <path d="M919 523.500C917.800 525.500 916.700 528 916.200 531H919Z" fill="#173f80" stroke="none"/>
</svg>
<svg width="8" height="12" style="left:0;top:519px" viewBox="0 0 8 12"><path d="M0 4C1.500 6 3 9 3.500 12H0Z" fill="#17427f"/></svg>

<div class="t" style="left:81.57px;top:12.00px;font-size:14px;font-weight:bold;-webkit-text-stroke:0;color:#d1d4dc;transform:scaleX(0.8932)">EURUSD</div>
<div class="t" style="left:207.53px;top:12.00px;font-size:14px;color:#d1d4dc;transform:scaleX(1.0015)">5m</div>
<div class="t" style="left:238.03px;top:12.00px;font-size:14px;color:#d1d4dc;transform:scaleX(0.9615)">15m</div>
<div class="t" style="left:277.00px;top:12.00px;font-size:14px;color:#d1d4dc;transform:scaleX(0.9637)">30m</div>
<div class="t" style="left:313.95px;top:12.00px;font-size:14px;color:#d1d4dc;transform:scaleX(1.0167)">1h</div>
<div class="t" style="left:341.51px;top:12.00px;font-size:14px;color:#d1d4dc;transform:scaleX(0.9616)">4h</div>
<div class="t" style="left:367.11px;top:12.00px;font-size:14px;color:#2f5fe3;transform:scaleX(0.9326)">D</div>
<div class="t" style="left:389.51px;top:12.00px;font-size:14px;color:#d1d4dc;transform:scaleX(0.9405)">W</div>
<div class="t" style="left:795.01px;top:12.00px;font-size:14px;color:#d1d4dc;transform:scaleX(0.9815)">Wealthy Educ...</div>
<div class="t" style="left:813.59px;top:53.00px;font-size:12px;-webkit-text-stroke:0;color:#d1d4dc;transform:scaleX(0.8591)">USD</div>
<div class="t" style="left:63.94px;top:53.00px;font-size:12px;-webkit-text-stroke:0;color:#43994a;transform:scaleX(1.0377)">+0.00006 (+0.01%)</div>
<div class="t" style="left:65.10px;top:77.00px;font-size:12px;-webkit-text-stroke:0;color:#9598a1;transform:scaleX(0.9200)">EMA</div>
<div class="t" style="left:97.44px;top:77.00px;font-size:12px;-webkit-text-stroke:0;color:#e03a48;transform:scaleX(1.0526)">1.08185</div>
<div class="t" style="left:65.10px;top:101.00px;font-size:12px;-webkit-text-stroke:0;color:#9598a1;transform:scaleX(0.9200)">EMA</div>
<div class="t" style="left:97.44px;top:101.00px;font-size:12px;font-weight:bold;-webkit-text-stroke:0;color:#d1d4dc;transform:scaleX(1.0526)">1.07919</div>
<div class="t" style="left:134.00px;top:429.00px;font-size:12px;font-weight:bold;-webkit-text-stroke:0;color:#9598a1;transform:scaleX(0.9342)">Apr</div>
<div class="t" style="left:230.54px;top:429.00px;font-size:12px;font-weight:bold;-webkit-text-stroke:0;color:#9598a1;transform:scaleX(0.9643)">May</div>
<div class="t" style="left:345.02px;top:429.00px;font-size:12px;font-weight:bold;-webkit-text-stroke:0;color:#9598a1;transform:scaleX(0.9913)">Jun</div>
<div class="t" style="left:455.00px;top:429.00px;font-size:12px;font-weight:bold;-webkit-text-stroke:0;color:#9598a1;transform:scaleX(1.0725)">Jul</div>
<div class="t" style="left:557.03px;top:429.00px;font-size:12px;font-weight:bold;-webkit-text-stroke:0;color:#9598a1;transform:scaleX(0.9130)">Aug</div>
<div class="t" style="left:670.09px;top:429.00px;font-size:12px;font-weight:bold;-webkit-text-stroke:0;color:#9598a1;transform:scaleX(0.9437)">Sep</div>
<div class="t" style="left:773.91px;top:429.00px;font-size:12px;-webkit-text-stroke:0;color:#9598a1;transform:scaleX(1.0487)">Oct</div>
<div class="t" style="left:70.07px;top:462.00px;font-size:14px;color:#d1d4dc;transform:scaleX(0.9375)">1D</div>
<div class="t" style="left:98.54px;top:462.00px;font-size:14px;color:#d1d4dc;transform:scaleX(0.8954)">5D</div>
<div class="t" style="left:125.61px;top:462.00px;font-size:14px;color:#d1d4dc;transform:scaleX(0.9256)">1M</div>
<div class="t" style="left:155.52px;top:462.00px;font-size:14px;color:#d1d4dc;transform:scaleX(0.8853)">3M</div>
<div class="t" style="left:185.02px;top:462.00px;font-size:14px;color:#d1d4dc;transform:scaleX(0.9376)">6M</div>
<div class="t" style="left:213.95px;top:462.00px;font-size:14px;color:#d1d4dc;transform:scaleX(0.8650)">YTD</div>
<div class="t" style="left:250.09px;top:462.00px;font-size:14px;color:#d1d4dc;transform:scaleX(0.9127)">1Y</div>
<div class="t" style="left:277.91px;top:462.00px;font-size:14px;color:#d1d4dc;transform:scaleX(0.8845)">5Y</div>
<div class="t" style="left:304.97px;top:462.00px;font-size:14px;color:#d1d4dc;transform:scaleX(1.0551)">All</div>
<div class="t" style="left:770.04px;top:462.00px;font-size:14px;color:#d1d4dc;transform:scaleX(0.9727)">16:18:51 (UTC)</div>
<div class="t" style="left:71.52px;top:504.00px;font-size:14px;color:#d1d4dc;transform:scaleX(0.9706)">Stock Screener</div>
<div class="t" style="left:209.53px;top:504.00px;font-size:14px;color:#d1d4dc;transform:scaleX(0.9736)">Pine Editor</div>
<div class="t" style="left:309.99px;top:504.00px;font-size:14px;color:#d1d4dc;transform:scaleX(1.0130)">Strategy Tester</div>
<div class="t" style="left:437.49px;top:504.00px;font-size:14px;color:#d1d4dc;transform:scaleX(0.9745)">Trading Panel</div>
<div class="t" style="left:814.02px;top:327.00px;font-size:12px;font-weight:bold;-webkit-text-stroke:0;color:#e9ffe9;transform:scaleX(0.9762)">1.06585</div>
<div class="t" style="left:814.01px;top:341.00px;font-size:12px;font-weight:bold;-webkit-text-stroke:0;color:#cdf3cd;transform:scaleX(0.9751)">04:41:08</div>
<div class="t" style="left:34.95px;top:4.75px;font-size:9.5px;font-weight:bold;-webkit-text-stroke:0;color:#ffffff;transform:scaleX(1.0261)">11</div>
</body></html>
